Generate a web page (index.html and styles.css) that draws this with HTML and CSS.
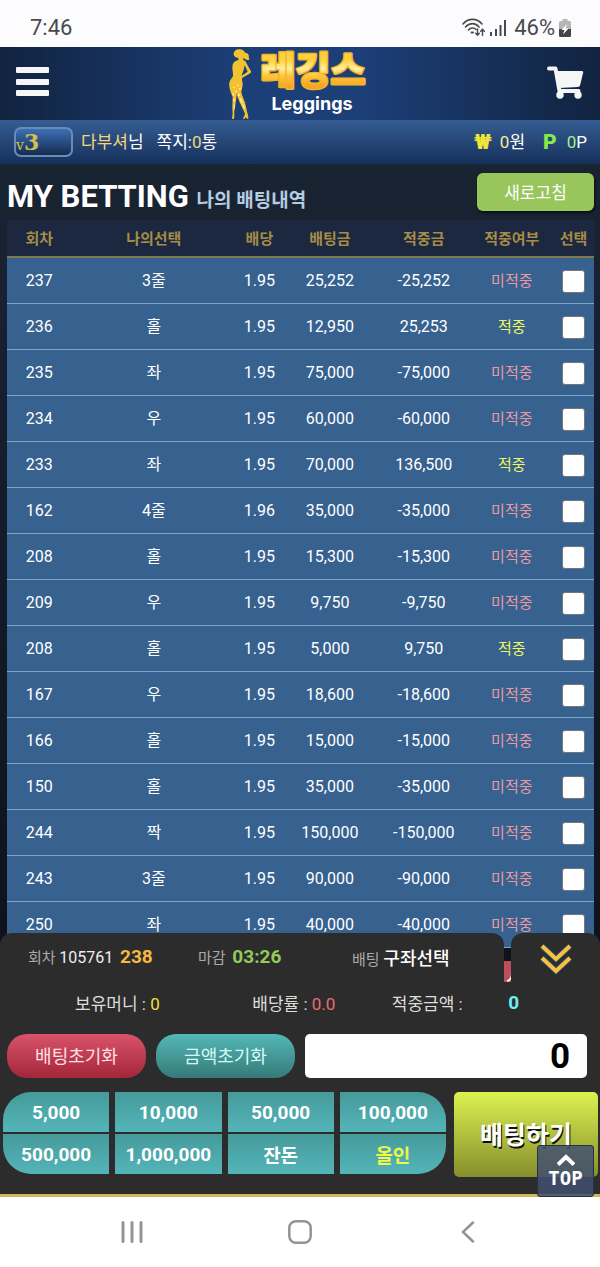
FILE: index.html
```html
<!DOCTYPE html>
<html lang="ko">
<head>
    <meta charset="UTF-8">
    <meta name="viewport" content="width=device-width, initial-scale=1.0">
    <title>레깅스 - 나의 배팅내역</title>
    <link rel="stylesheet" href="styles.css">
</head>
<body>
    <!-- 상태 표시줄 -->
    <div class="status-bar">
        <span>7:46</span>
        <div class="status-icons">
            <svg width="24" height="20" viewBox="0 0 24 20" fill="none" stroke="#4a4a4a" stroke-width="1.6" stroke-linecap="round">
                <path d="M1 6C6-.2 15-.2 20 6M3.500 9C7.500 4.500 13.500 4.500 17 9M6.500 12C8.500 9.500 12 9.500 14 11.500"/>
                <path d="M9.500 14.500h1.500" stroke-width="2"/>
                <path d="M15.500 11v6M13.700 15.300l1.800 1.900 1.800-1.900M20.500 17.500v-6M18.700 13.200l1.800-1.900 1.800 1.900" stroke-width="1.400"/>
            </svg>
            <svg width="16" height="18" viewBox="0 0 16 18" stroke="#4a4a4a" stroke-width="2">
                <path d="M1 13v4M6 10v7M10.500 6v11M15 1v16"/>
            </svg>
            <span>46%</span>
            <svg width="12" height="18" viewBox="0 0 12 18">
                <path d="M3.500 0h5v2h2q1.500 0 1.500 1.500V10H0V3.500Q0 2 1.500 2h2z" fill="#b5b5b5"/>
                <path d="M0 10h12v6.500q0 1.500-1.500 1.500h-9Q0 18 0 16.500z" fill="#444"/>
                <path d="M8 5L2.500 11H5.500L4 15.500 9.500 9.500H6.500z" fill="#fff"/>
            </svg>
        </div>
    </div>

    <!-- 헤더 -->
    <header class="header">
        <button class="icon-btn" aria-label="메뉴">
            <svg width="33" height="30" viewBox="0 0 33 30" fill="#f6f6f6">
                <rect width="33" height="6" rx="1"/>
                <rect y="12" width="33" height="6" rx="1"/>
                <rect y="23" width="33" height="6" rx="1"/>
            </svg>
        </button>
        <a class="logo" href="#">
            <svg class="logo-girl" width="24" height="72" viewBox="34 8 72 216">
                <path fill="#f2c230" d="M66 12C74 10 82 14 85 22C94 22 99 30 96 37C100 40 98 45 92 44C88 44 84 40 81 38L79 44C86 45 88 49 90 55L103 78C104 82 101 84 97 86L76 98C75 106 79 112 78 120C77 128 74 134 74 141C76 152 84 166 87 180C89 190 91 201 94 209L95 220H90L88 214L83 221H79L85 206C80 192 68 172 61 150L60 142C60 154 57 172 55 186C52 198 53 206 53 214L51 221H46L48 204C46 190 48 170 48 154C42 140 36 124 38 112C39 104 47 98 49 92C50 82 45 70 48 58C50 50 57 46 65 44L65 38C57 38 50 32 51 24C52 17 58 12 66 12ZM84 59L82 70C80 78 76 84 75 91L93 79Z"/>
                <path fill="#fff3bd" d="M50 124h4v4h-4zM62 118h4v4h-4zM68 128h4v5h-4zM56 136h4v5h-4zM48 144h4v6h-4zM64 146h5v7h-5zM50 160h4v8h-4zM68 158l6 2 5 14-5-2zM76 176l5 2 4 14-4-4zM51 178h3v12h-3z"/>
            </svg>
            <span class="logo-text">
                <svg class="logo-title" width="112" height="42" viewBox="0 0 112 42">
                    <defs>
                        <linearGradient id="gold" x1="0" y1="0" x2="0" y2="1">
                            <stop offset="0.25" stop-color="#ffd23d"/>
                            <stop offset="0.45" stop-color="#fff0a0"/>
                            <stop offset="0.6" stop-color="#ffc83a"/>
                            <stop offset="0.85" stop-color="#f6a423"/>
                        </linearGradient>
                    </defs>
                    <text class="logo-name" x="57" y="36" text-anchor="middle" fill="url(#gold)">레깅스</text>
                </svg>
                <em>Leggings</em>
            </span>
        </a>
        <button class="icon-btn" aria-label="장바구니">
            <svg width="37" height="33" viewBox="0 0 37 33">
                <path d="M2 2.500h6.500L12.500 25h19" fill="none" stroke="#f6f6f6" stroke-width="4" stroke-linecap="round" stroke-linejoin="round"/>
                <path d="M8.500 5H35q1.500 0 1.200 1.500L33 19.500q-.4 1.300-2 1.500L12 22z" fill="#f6f6f6"/>
                <circle cx="13" cy="29" r="3.700" fill="#f6f6f6"/>
                <circle cx="31" cy="29" r="3.700" fill="#f6f6f6"/>
            </svg>
        </button>
    </header>

    <!-- 회원 정보 -->
    <div class="user-bar">
        <span class="level"><small>v</small>3</span>
        <span class="user-name"><b>다부셔</b>님</span>
        <a class="note" href="#">쪽지:<b>0</b>통</a>
        <span class="won">₩</span>
        <span class="money"><b>0</b>원</span>
        <span class="point">P</span>
        <span class="point-value"><b>0</b>P</span>
    </div>

    <main class="main">
        <div class="title-row">
            <h1>MY BETTING <small>나의 배팅내역</small></h1>
            <button class="refresh-btn">새로고침</button>
        </div>

        <table class="bet-table">
            <colgroup>
                <col class="c-round"><col class="c-pick"><col class="c-rate"><col class="c-bet"><col class="c-win"><col class="c-result"><col class="c-check">
            </colgroup>
            <thead>
                <tr><th>회차</th><th>나의선택</th><th>배당</th><th>배팅금</th><th>적중금</th><th>적중여부</th><th>선택</th></tr>
            </thead>
            <tbody>
                <tr><td>237</td><td>3줄</td><td>1.95</td><td>25,252</td><td>-25,252</td><td class="lose">미적중</td><td><input type="checkbox" aria-label="선택"></td></tr>
                <tr><td>236</td><td>홀</td><td>1.95</td><td>12,950</td><td>25,253</td><td class="win">적중</td><td><input type="checkbox" aria-label="선택"></td></tr>
                <tr><td>235</td><td>좌</td><td>1.95</td><td>75,000</td><td>-75,000</td><td class="lose">미적중</td><td><input type="checkbox" aria-label="선택"></td></tr>
                <tr><td>234</td><td>우</td><td>1.95</td><td>60,000</td><td>-60,000</td><td class="lose">미적중</td><td><input type="checkbox" aria-label="선택"></td></tr>
                <tr><td>233</td><td>좌</td><td>1.95</td><td>70,000</td><td>136,500</td><td class="win">적중</td><td><input type="checkbox" aria-label="선택"></td></tr>
                <tr><td>162</td><td>4줄</td><td>1.96</td><td>35,000</td><td>-35,000</td><td class="lose">미적중</td><td><input type="checkbox" aria-label="선택"></td></tr>
                <tr><td>208</td><td>홀</td><td>1.95</td><td>15,300</td><td>-15,300</td><td class="lose">미적중</td><td><input type="checkbox" aria-label="선택"></td></tr>
                <tr><td>209</td><td>우</td><td>1.95</td><td>9,750</td><td>-9,750</td><td class="lose">미적중</td><td><input type="checkbox" aria-label="선택"></td></tr>
                <tr><td>208</td><td>홀</td><td>1.95</td><td>5,000</td><td>9,750</td><td class="win">적중</td><td><input type="checkbox" aria-label="선택"></td></tr>
                <tr><td>167</td><td>우</td><td>1.95</td><td>18,600</td><td>-18,600</td><td class="lose">미적중</td><td><input type="checkbox" aria-label="선택"></td></tr>
                <tr><td>166</td><td>홀</td><td>1.95</td><td>15,000</td><td>-15,000</td><td class="lose">미적중</td><td><input type="checkbox" aria-label="선택"></td></tr>
                <tr><td>150</td><td>홀</td><td>1.95</td><td>35,000</td><td>-35,000</td><td class="lose">미적중</td><td><input type="checkbox" aria-label="선택"></td></tr>
                <tr><td>244</td><td>짝</td><td>1.95</td><td>150,000</td><td>-150,000</td><td class="lose">미적중</td><td><input type="checkbox" aria-label="선택"></td></tr>
                <tr><td>243</td><td>3줄</td><td>1.95</td><td>90,000</td><td>-90,000</td><td class="lose">미적중</td><td><input type="checkbox" aria-label="선택"></td></tr>
                <tr><td>250</td><td>좌</td><td>1.95</td><td>40,000</td><td>-40,000</td><td class="lose">미적중</td><td><input type="checkbox" aria-label="선택"></td></tr>
            </tbody>
        </table>
        <div class="table-actions">
            <button class="delete-btn">선택 삭제</button>
        </div>

        <!-- 하단 배팅 패널 -->
        <section class="bet-panel">
            <div class="tabs">
                <div class="tab-info">
                    <span>회차 <i>105761</i> <b class="orange">238</b></span>
                    <span>마감 <b class="green">03:26</b></span>
                    <span>배팅 <strong>구좌선택</strong></span>
                </div>
                <button class="tab-toggle" aria-label="접기">
                    <svg width="36" height="34" viewBox="0 0 36 34" fill="none">
                        <path d="M4 4L18 17 32 4M4 16L18 29 32 16" stroke="#2c4374" stroke-width="6"/>
                        <path d="M4 4L18 17 32 4M4 16L18 29 32 16" stroke="#f5c23c" stroke-width="4"/>
                    </svg>
                </button>
            </div>
            <div class="panel-body">
                <div class="summary">
                    <span>보유머니 : <b class="yellow">0</b></span>
                    <span>배당률 : <b class="red">0.0</b></span>
                    <span>적중금액 :</span>
                    <b class="cyan">0</b>
                </div>
                <div class="amount-row">
                    <button class="pill pill-red">배팅초기화</button>
                    <button class="pill pill-teal">금액초기화</button>
                    <input class="amount" type="text" value="0" aria-label="배팅금액">
                </div>
                <div class="bet-row">
                    <div class="chips">
                        <button>5,000</button>
                        <button>10,000</button>
                        <button>50,000</button>
                        <button>100,000</button>
                        <button>500,000</button>
                        <button>1,000,000</button>
                        <button>잔돈</button>
                        <button class="all-in">올인</button>
                    </div>
                    <button class="bet-btn">배팅하기</button>
                </div>
            </div>
            <a class="top-btn" href="#">
                <svg width="18" height="12" viewBox="0 0 18 12" fill="none" stroke="#fff" stroke-width="4">
                    <path d="M1 10.500L9 3l8 7.500"/>
                </svg>
                TOP
            </a>
        </section>
    </main>

    <!-- 내비게이션 바 -->
    <nav class="nav-bar">
        <button class="icon-btn" aria-label="최근 앱">
            <svg width="22" height="22" viewBox="0 0 22 22" stroke="#949494" stroke-width="3" stroke-linecap="round">
                <path d="M2 1.500v19M11 1.500v19M20 1.500v19"/>
            </svg>
        </button>
        <button class="icon-btn" aria-label="홈">
            <svg width="24" height="24" viewBox="0 0 24 24" fill="none" stroke="#949494" stroke-width="2.500">
                <rect x="1.300" y="1.300" width="21.400" height="21.400" rx="6.500"/>
            </svg>
        </button>
        <button class="icon-btn" aria-label="뒤로">
            <svg width="14" height="22" viewBox="0 0 14 22" fill="none" stroke="#949494" stroke-width="2.500" stroke-linecap="round">
                <path d="M12 1.500L2 11l10 9.500"/>
            </svg>
        </button>
    </nav>
</body>
</html>
```
FILE: styles.css
```css
:root {
    --panel: #2c2c2c;
    --row: #37618f;
    --gold: #a68c45;
    --teal: #53b5b9;
    --teal-dark: #469a9a;
}

* {
    box-sizing: border-box;
}

body {
    font-family: Roboto, "Noto Sans CJK KR", sans-serif;
    font-size: 16px;
    margin: 0;
    height: 100vh;
    display: flex;
    flex-direction: column;
    overflow: hidden;
    color: #fff;
    background: #111722;
}

button,
input {
    font-family: inherit;
    margin: 0;
    border: 0;
    padding: 0;
    color: inherit;
}

a {
    color: inherit;
    text-decoration: none;
}

svg {
    display: block;
}

.icon-btn {
    background: none;
}

/* 상태 표시줄 */
.status-bar {
    height: 47px;
    flex: none;
    display: flex;
    align-items: flex-end;
    justify-content: space-between;
    padding: 0 29px 6px 30px;
    background: #fcfcfe;
    color: #4a4a4a;
    font-size: 22px;
    line-height: 26px;
}

.status-icons {
    display: flex;
    align-items: center;
    gap: 4px;
}

.status-icons span {
    margin-left: 4px;
}

/* 헤더 */
.header {
    height: 73px;
    flex: none;
    display: flex;
    align-items: center;
    justify-content: space-between;
    padding: 0 16px;
    background: linear-gradient(to right, #11233f, #1c3f78 40%, #1c3f78 60%, #11233f);
}

.header .icon-btn {
    padding-bottom: 3px;
}

.logo {
    display: flex;
    gap: 4px;
}

.logo-text {
    display: flex;
    flex-direction: column;
    align-items: center;
}

.logo-title {
    overflow: visible;
}

.logo-name {
    font-size: 38px;
    font-weight: 900;
    stroke: #f4b22c;
    stroke-width: 3px;
    stroke-linejoin: round;
    paint-order: stroke;
}

.logo-text em {
    font-family: Inter, sans-serif;
    font-style: normal;
    font-size: 18px;
    font-weight: 700;
    line-height: 28px;
}

/* 회원 정보 */
.user-bar {
    height: 44px;
    flex: none;
    display: flex;
    align-items: center;
    padding: 0 13px 0 14px;
    font-size: 17px;
    line-height: 24px;
    background: linear-gradient(#355d92, #16305b);
}

.user-bar b {
    font-weight: 400;
    color: #f0d878;
}

.level {
    width: 59px;
    height: 30px;
    border: 2px solid #6a8ab8;
    border-radius: 7px;
    background: linear-gradient(#3d6fb5, #142c50);
    font-family: "DejaVu Serif", serif;
    font-size: 22px;
    font-weight: 700;
    line-height: 26px;
    color: #cfc04e;
}

.level small {
    font-size: 14px;
    font-weight: 400;
}

.user-name {
    margin-left: 8px;
}

.note {
    margin-left: 13px;
    margin-right: auto;
}

.won,
.point {
    font-size: 21px;
    font-weight: 900;
    color: #f2e53a;
}

.point {
    color: #86e94e;
    margin-left: 18px;
}

.money {
    margin-left: 8px;
}

.point-value {
    margin-left: 10px;
}

.user-bar .money b {
    color: #f3ef9c;
}

.user-bar .point-value b {
    color: #a9ee8c;
}

/* 배팅내역 */
.main {
    flex: 1;
    min-height: 0;
    position: relative;
    overflow: hidden;
    padding: 0 6px 0 7px;
    background: linear-gradient(#192433, #0b0d17);
}

.title-row {
    height: 56px;
    display: flex;
    align-items: center;
    justify-content: space-between;
    padding-bottom: 1px;
}

h1 {
    margin: 0;
    font-size: 31px;
    line-height: 36px;
    padding-top: 15px;
}

h1 small {
    font-size: 19px;
    color: #b4cbe0;
}

.refresh-btn {
    width: 117px;
    height: 38px;
    border-radius: 6px;
    background: #98c65c;
    box-shadow: 1px 2px 3px rgba(0, 0, 0, 0.6);
    font-size: 17px;
}

.bet-table {
    width: 100%;
    table-layout: fixed;
    border-collapse: separate;
    border-spacing: 0;
    text-align: center;
    background: var(--row);
}

.c-round { width: 11%; }
.c-pick { width: 28%; }
.c-rate { width: 8%; }
.c-bet { width: 16%; }
.c-win { width: 16%; }
.c-result { width: 14%; }
.c-check { width: 7%; }

.bet-table th {
    height: 38px;
    padding: 0 0 2px;
    font-size: 15px;
    color: var(--gold);
    background: #1b2840;
    border-bottom: 2px solid #80764f;
    white-space: nowrap;
}

.bet-table td {
    height: 46px;
    padding: 0;
    line-height: 22px;
    border-bottom: 1px solid #7ea6c8;
}

.bet-table .lose {
    font-size: 15px;
    color: #e89aa4;
}

.bet-table .win {
    font-size: 15px;
    color: #f0f860;
}

.bet-table input {
    appearance: none;
    display: block;
    width: 23px;
    height: 23px;
    margin: 1px auto 0;
    background: #fff;
    border: 1px solid #777;
    border-radius: 3px;
}

.table-actions {
    display: flex;
    justify-content: flex-end;
    padding-top: 13px;
}

.delete-btn {
    width: 98px;
    height: 36px;
    background: #bd4f58;
    font-size: 20px;
}

/* 하단 배팅 패널 */
.bet-panel {
    position: absolute;
    left: 0;
    right: 0;
    bottom: 0;
    border-bottom: 3px solid #d3b756;
}

.tabs {
    display: flex;
    gap: 7px;
    height: 49px;
}

.tab-info {
    flex: 1;
    display: grid;
    grid-template-columns: 170fr 154fr 152fr;
    align-items: center;
    padding: 0 0 2px 28px;
    border-radius: 12px 12px 0 0;
    background: var(--panel);
    font-size: 15px;
    color: #aaa;
    white-space: nowrap;
}

.tab-info i {
    font-style: normal;
    font-size: 16px;
    color: #eee;
}

.tab-info b {
    font-size: 19px;
    margin-left: 3px;
}

.tab-info strong {
    font-size: 18px;
    font-weight: 500;
    color: #fff;
}

.orange { color: #f5b942; }
.green { color: #94c95c; }
.yellow { color: #f0e040; }
.red { color: #e8706e; }
.cyan { color: #6deef2; }

.tab-toggle {
    width: 89px;
    display: flex;
    justify-content: center;
    align-items: center;
    padding-top: 3px;
    border-radius: 12px 12px 0 0;
    background: var(--panel);
}

.panel-body {
    padding: 0 2px 17px 3px;
    background: var(--panel);
}

.summary {
    height: 40px;
    display: grid;
    grid-template-columns: 178fr 140fr 117fr 90fr;
    align-items: center;
    padding-left: 72px;
    font-size: 17px;
    color: #ddd;
}

.summary span b {
    font-weight: 400;
}

.summary .cyan {
    font-size: 19px;
}

.amount-row {
    display: flex;
    gap: 10px;
    padding: 12px 11px 14px 4px;
}

.pill {
    width: 139px;
    height: 44px;
    padding-bottom: 2px;
    border-radius: 20px;
    font-size: 18px;
}

.pill-red {
    background: linear-gradient(#d9536b, #a3263a);
    color: #ffe0e4;
}

.pill-teal {
    background: linear-gradient(#54b8b6, #357a78);
    color: #d4fbf8;
}

.amount {
    flex: 1;
    min-width: 0;
    height: 44px;
    padding: 0 17px;
    border-radius: 5px;
    background: #fff;
    color: #000;
    font-size: 35px;
    font-weight: 700;
    text-align: right;
}

.bet-row {
    display: flex;
    gap: 8px;
}

.chips {
    flex: 1;
    display: grid;
    grid-template-columns: repeat(4, 1fr);
    grid-auto-rows: 40px;
    align-content: start;
    gap: 2px 6px;
}

.chips button {
    background: linear-gradient(var(--teal-dark), var(--teal));
    font-size: 19px;
    font-weight: 700;
}

.chips button:nth-child(1) { border-top-left-radius: 28px; }
.chips button:nth-child(4) { border-top-right-radius: 28px; }
.chips button:nth-child(5) { border-bottom-left-radius: 28px; }
.chips button:nth-child(8) { border-bottom-right-radius: 28px; }

.chips .all-in {
    color: #f0f84a;
}

.bet-btn {
    width: 144px;
    height: 85px;
    padding-bottom: 4px;
    border-radius: 5px;
    background: linear-gradient(#dcf250, #868e2c);
    font-size: 25px;
    font-weight: 700;
    text-shadow: 1px 2px 0 #111;
}

.top-btn {
    position: absolute;
    right: 6px;
    bottom: -3px;
    width: 57px;
    height: 52px;
    display: flex;
    flex-direction: column;
    align-items: center;
    justify-content: center;
    gap: 1px;
    border: 1px solid #26304a;
    border-radius: 3px;
    background: rgba(66, 80, 112, 0.85);
    font-family: "DejaVu Sans Mono", monospace;
    font-size: 19px;
    font-weight: 700;
    line-height: 22px;
}

/* 내비게이션 바 */
.nav-bar {
    height: 70px;
    flex: none;
    display: grid;
    grid-template-columns: repeat(3, 1fr);
    justify-items: center;
    align-items: center;
    padding: 0 48px;
    background: #fff;
}
```
